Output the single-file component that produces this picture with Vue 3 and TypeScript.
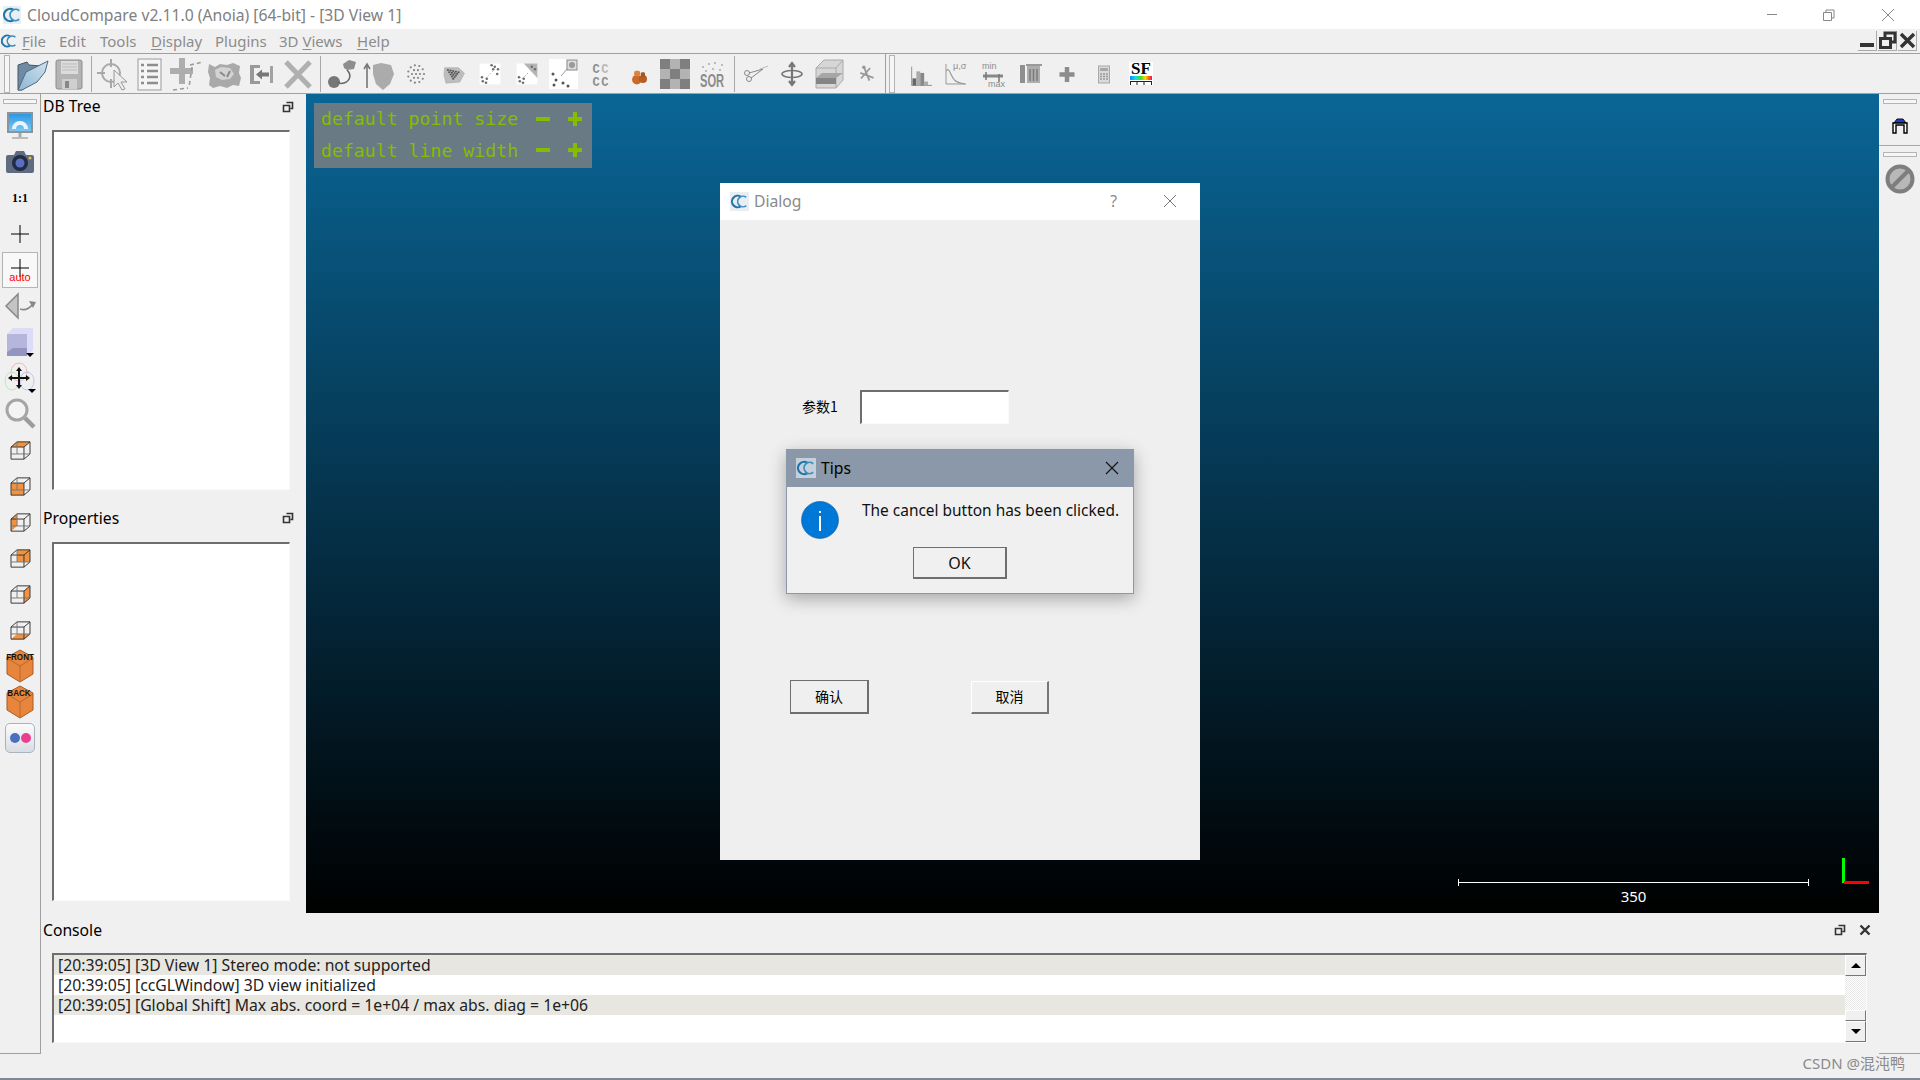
<template>
  <div class="app">
    <svg class="defs" width="0" height="0">
      <symbol id="cc" viewBox="0 0 20 20">
        <path d="M11.500 4.200a6.800 6.800 0 1 0 0 11.600" fill="none" stroke="#1f75a8" stroke-width="2.400" />
        <path d="M18 5.200a6.200 6.200 0 1 0 0 9.600" fill="none" stroke="#3a8fc0" stroke-width="2" />
      </symbol>
      <symbol id="float" viewBox="0 0 12 12">
        <path d="M4.500 1.500h6v6h-2M1.500 4.500h6v6h-6z" fill="#f0f0f0" stroke="#333" stroke-width="1.600" />
      </symbol>
      <linearGradient id="rainbow"><stop offset="0" stop-color="#18f" /><stop offset=".25" stop-color="#1dd" /><stop offset=".5" stop-color="#4d2" /><stop offset=".7" stop-color="#fd0" /><stop offset=".85" stop-color="#f60" /><stop offset="1" stop-color="#f09" /></linearGradient>
      <linearGradient id="folder-front" x1="0" y1="1" x2="1" y2="0"><stop offset="0" stop-color="#8fb6d2" /><stop offset="1" stop-color="#cfe3f0" /></linearGradient>
    </svg>

    <!-- title bar -->
    <header class="titlebar">
      <svg class="logo" width="18" height="18"><use href="#cc" /></svg>
      <span class="title">CloudCompare v2.11.0 (Anoia) [64-bit] - [3D View 1]</span>
      <div class="winctl">
        <svg width="58" height="28" viewBox="0 0 58 28"><path d="M24 13.500h10" stroke="#888" /></svg>
        <svg width="58" height="28" viewBox="0 0 58 28"><path d="M22.500 11.500h8v8h-8zM25 11.500V9h8v8h-2.500" fill="none" stroke="#888" /></svg>
        <svg width="58" height="28" viewBox="0 0 58 28"><path d="M23 8l12 12M35 8L23 20" stroke="#888" /></svg>
      </div>
    </header>

    <!-- menu -->
    <nav class="menubar">
      <svg class="menu-logo" width="16" height="16"><use href="#cc" /></svg>
      <span class="menu" style="width:37px"><u>F</u>ile</span>
      <span class="menu" style="width:41px">Edit</span>
      <span class="menu" style="width:51px">Tools</span>
      <span class="menu" style="width:64px"><u>D</u>isplay</span>
      <span class="menu" style="width:64px">Plugins</span>
      <span class="menu" style="width:78px">3D <u>V</u>iews</span>
      <span class="menu"><u>H</u>elp</span>
      <div class="mdi">
        <button class="mdi-btn"><svg width="18" height="18"><rect x="2" y="12" width="14" height="4" fill="#333" /></svg></button>
        <button class="mdi-btn"><svg width="19" height="19"><path d="M7 6V2h10v9h-4M2.500 7.500h10v9h-10z" fill="none" stroke="#333" stroke-width="3" /></svg></button>
        <button class="mdi-btn"><svg width="19" height="19"><path d="M3 3l13 13M16 3L3 16" stroke="#333" stroke-width="3.400" /></svg></button>
      </div>
    </nav>

    <!-- main toolbar -->
    <div class="toolbar">
      <span class="grip-v first"></span>
      <span class="tb"><svg width="36" height="36">
        <path d="M4 9l9-3 2 3 12 1v8L8 34H4z" fill="#6f8aa3" stroke="#44586a" />
        <path d="M4 34l8-18 22-11-3 11-8 10-15 8z" fill="url(#folder-front)" stroke="#4f6a80" />
      </svg></span>
      <span class="tb"><svg width="36" height="36">
        <rect x="5" y="4" width="26" height="29" rx="2" fill="#b4b4b4" stroke="#8d8d8d" />
        <rect x="10" y="5" width="17" height="13" fill="#dcdcdc" />
        <path d="M11 8h15M11 11h15M11 14h15" stroke="#bbb" />
        <rect x="11" y="23" width="15" height="10" fill="#cfcfcf" />
        <rect x="14" y="25" width="4" height="7" fill="#888" />
      </svg></span>
      <span class="sep"></span>
      <span class="tb"><svg width="36" height="36">
        <circle cx="16" cy="17" r="9" fill="none" stroke="#a8a8a8" stroke-width="2" />
        <path d="M16 3v8M16 23v9M2 17h8" stroke="#a8a8a8" stroke-width="2" />
        <path d="M19 14v17l4-4 4 7 3-1-4-7h6z" fill="#ededed" stroke="#999" />
      </svg></span>
      <span class="tb"><svg width="36" height="36">
        <rect x="6" y="3" width="23" height="31" fill="#f5f5f5" stroke="#9b9b9b" />
        <path d="M9 9h3M15 9h11M9 15h3M15 15h11M9 21h3M15 21h11M9 27h3M15 27h11" stroke="#8e8e8e" stroke-width="2.400" />
      </svg></span>
      <span class="tb"><svg width="36" height="36">
        <path d="M13 2v26M1 15h23" stroke="#adadad" stroke-width="6" />
        <path d="M21 9l13-3M23 11l-3 20M4 34l15-2" stroke="#9a9a9a" stroke-width="1.600" stroke-dasharray="4 3" fill="none" />
      </svg></span>
      <span class="tb"><svg width="36" height="36">
        <path d="M3 8l6 3 5-3 7 1 6-2 7 3-1 7 2 5-2 8-6-1-6 3-7-2-7 2-4-3 1-7-2-6z" fill="#a9a9a9" />
        <path d="M9 14l6-3 9 1 4 6-4 5-8 1-6-3z" fill="#d3d3d3" />
        <path d="M14 16l5 4M24 15l-3 6" stroke="#8a8a8a" stroke-width="2" />
      </svg></span>
      <span class="tb"><svg width="36" height="36">
        <path d="M7 9h10v3h-6v13h6v3H7z" fill="#999" />
        <path d="M13 18.500l6-5v3h7v4h-7v3z" fill="#777" />
        <rect x="27" y="10" width="3" height="17" fill="#a2a2a2" />
      </svg></span>
      <span class="tb"><svg width="36" height="36"><path d="M6 6l24 25M30 6L6 31" stroke="#b0b0b0" stroke-width="5" /></svg></span>
      <span class="sep"></span>
      <span class="tb"><svg width="36" height="36">
        <circle cx="10" cy="26" r="6" fill="#777" />
        <path d="M19 8l6-4 7 2-2 7-7 1-3-2z" fill="#8d8d8d" />
        <path d="M23 14c5 5 3 11-3 13-3 1-5 0-6-1" fill="none" stroke="#666" stroke-width="1.500" />
      </svg></span>
      <span class="tb"><svg width="36" height="36">
        <path d="M6 32V10M3 13l3-5 3 5" fill="none" stroke="#777" stroke-width="1.600" />
        <path d="M12 9l8-2 10 2 3 9-4 10-7 6-7-6-3-10z" fill="#ababab" />
      </svg></span>
      <span class="tb"><svg width="36" height="36"><circle v-for="(d, i) in dotCloud" :key="i" :cx="d[0]" :cy="d[1]" r="1.100" fill="#858585" /></svg></span>
      <span class="tb"><svg width="36" height="36">
        <g transform="translate(7 9) scale(.66 .55)">
          <path d="M4 5h21l9 10-7 16-21 2-3-15z" fill="#bdbdbd" stroke="#a8a8a8" />
          <circle v-for="(d, i) in meshDots" :key="i" :cx="d[0]" :cy="d[1]" r="1.700" fill="#555" />
        </g>
      </svg></span>
      <span class="tb"><svg width="36" height="36">
        <g transform="translate(3.600 3.600) scale(.8)">
          <rect x="5" y="5" width="26" height="26" fill="#fff" />
          <circle v-for="(d, i) in scatterDots" :key="i" :cx="d[0]" :cy="d[1]" r="1.600" fill="#6d6d6d" />
          <path d="M12 24l10-10" stroke="#aaa" stroke-dasharray="2 2" />
        </g>
      </svg></span>
      <span class="tb"><svg width="36" height="36">
        <g transform="translate(3.600 3.600) scale(.8)">
          <rect x="5" y="5" width="26" height="26" fill="#fff" />
          <path d="M14 5h17v18z" fill="#b4b4b4" />
          <circle v-for="(d, i) in scatterDots.slice(0, 6)" :key="i" :cx="d[0]" :cy="d[1]" r="1.600" fill="#6d6d6d" />
          <path d="M12 24l8-8" stroke="#888" stroke-dasharray="2 2" />
        </g>
      </svg></span>
      <span class="tb"><svg width="36" height="36">
        <rect x="3" y="3" width="29" height="30" fill="#fff" />
        <circle cx="7" cy="18" r="1.500" fill="#555" /><circle cx="10" cy="24" r="1.500" fill="#555" /><circle cx="8" cy="29" r="1.500" fill="#555" />
        <circle cx="17" cy="27" r="1.500" fill="#555" /><circle cx="22" cy="30" r="1.500" fill="#555" />
        <path d="M15 20l7-8" stroke="#999" />
        <rect x="21" y="4" width="10" height="10" fill="#ddd" stroke="#888" />
        <circle cx="26" cy="9" r="3" fill="#999" />
      </svg></span>
      <span class="tb"><svg width="36" height="36"><text x="9.500" y="17" class="cc-t">C<tspan fill="#b8b8b8">C</tspan></text><text x="9.500" y="30" class="cc-t">CC</text></svg></span>
      <span class="tb"><svg width="36" height="36">
        <g transform="translate(8 8) scale(.68)">
          <circle cx="13" cy="23" r="7" fill="#c96a2a" /><circle cx="22" cy="22" r="6" fill="#b85d22" />
          <rect x="9" y="10" width="9" height="8" rx="3" fill="#d9843f" /><rect x="19" y="12" width="6" height="7" rx="2" fill="#a85420" />
        </g>
      </svg></span>
      <span class="tb"><svg width="36" height="36">
        <rect x="3" y="3" width="30" height="30" fill="#b3b3b3" />
        <path d="M3 3h10v10H3zM23 3h10v10H23zM13 13h10v10H13zM3 23h10v10H3zM23 23h10v10H23z" fill="#7f7f7f" />
      </svg></span>
      <span class="tb"><svg width="36" height="36">
        <text transform="translate(6 31) scale(.62 1)" class="sor">SOR</text>
        <path d="M8 11h2M14 8h2M20 7h2M27 9h2M11 15h2M18 13h2M25 14h2" stroke="#aaa" stroke-width="1.500" />
      </svg></span>
      <span class="sep tight"></span>
      <span class="tb"><svg width="36" height="36">
        <circle cx="10" cy="17" r="2.500" fill="none" stroke="#888" /><circle cx="12" cy="23" r="2.500" fill="none" stroke="#888" />
        <path d="M12 17l14-4M14 22l12-9" stroke="#888" /><path d="M23 13l8-3" stroke="#bbb" />
      </svg></span>
      <span class="tb"><svg width="36" height="36">
        <path d="M18 7v22M15 11l3-4 3 4M15 25l3 4 3-4" fill="none" stroke="#777" stroke-width="2.200" />
        <ellipse cx="18" cy="18" rx="10" ry="3.500" fill="none" stroke="#777" stroke-width="1.600" />
      </svg></span>
      <span class="tb"><svg width="36" height="36">
        <path d="M5 12l8-8h19v20l-7 8H5z" fill="#d6d6d6" stroke="#aaa" />
        <path d="M5 12h20v20M25 12l7-8" fill="none" stroke="#aaa" />
        <path d="M5 22l6-5h21l-7 5z" fill="#a6a6a6" /><rect x="5" y="22" width="20" height="6" fill="#858585" />
      </svg></span>
      <span class="tb"><svg width="36" height="36">
        <g transform="translate(6 5) scale(.7)">
          <path d="M14 8l8 20M23 10l-13 15M9 17l19 7" stroke="#9a9a9a" stroke-width="2.600" />
          <circle cx="14" cy="9" r="2.500" fill="#999" />
        </g>
      </svg></span>
      <span class="tbreak"></span>
      <span class="grip-v"></span>
      <span class="tb"><svg width="36" height="36">
        <g transform="translate(5 6) scale(.78)">
          <path d="M6 6v24h26" fill="none" stroke="#777" />
          <rect x="7" y="21" width="5" height="9" fill="#666" /><rect x="12" y="12" width="5" height="18" fill="#aaa" /><rect x="17" y="14" width="5" height="16" fill="#888" /><rect x="22" y="25" width="5" height="5" fill="#aaa" />
        </g>
      </svg></span>
      <span class="tb"><svg width="36" height="36">
        <path d="M8 8v20h20" fill="none" stroke="#999" />
        <path d="M8 15c3-4 4 2 7 7 2 4 6 5 12 6" fill="none" stroke="#999" stroke-width="1.200" />
        <text x="15" y="13" class="thin">μ,σ</text>
      </svg></span>
      <span class="tb"><svg width="36" height="36">
        <text x="7" y="13" class="thin">min</text>
        <path d="M8 20h20" stroke="#888" stroke-width="3" /><path d="M11 16v8M24 18v8" stroke="#777" stroke-width="1.500" />
        <text x="13" y="31" class="thin">max</text>
      </svg></span>
      <span class="tb"><svg width="36" height="36">
        <rect x="8" y="9" width="5" height="18" fill="#8f8f8f" />
        <path d="M15 10h13v17H15z" fill="#adadad" /><path d="M14 9h16" stroke="#999" stroke-width="2" />
        <path d="M18 13v12M21.500 13v12M25 13v12" stroke="#777" stroke-width="1.400" />
      </svg></span>
      <span class="tb"><svg width="36" height="36"><path d="M18 11v15M10.500 18.500h15" stroke="#8c8c8c" stroke-width="4.500" /></svg></span>
      <span class="tb"><svg width="36" height="36">
        <rect x="12.500" y="10" width="11" height="17" fill="#dadada" stroke="#a8a8a8" />
        <rect x="14" y="12" width="8" height="3" fill="#a8a8a8" />
        <path d="M14 18h8M14 20.500h8M14 23h8" stroke="#999" stroke-width="1.400" stroke-dasharray="2 1" />
      </svg></span>
      <span class="tb"><svg width="36" height="36">
        <rect x="6" y="6" width="24" height="23" fill="#fff" />
        <text x="18" y="18" text-anchor="middle" class="sf">SF</text>
        <rect x="7" y="20" width="22" height="4" fill="url(#rainbow)" />
        <path d="M7 25.500h22M7.500 25v4M14 25v4M21 25v4M28.500 25v4" stroke="#222" />
      </svg></span>
    </div>

    <div class="main">
      <!-- left view toolbar -->
      <aside class="side left">
        <span class="grip-h"></span>
        <span class="sb"><svg width="30" height="30">
          <defs><linearGradient id="screen" x1="0" y1="0" x2="0" y2="1"><stop offset="0" stop-color="#2f97e4" /><stop offset="1" stop-color="#7cc8f4" /></linearGradient></defs>
          <rect x="2" y="1" width="26" height="21" fill="#8a949c" />
          <rect x="4" y="3" width="22" height="17" fill="url(#screen)" />
          <path d="M9 18a6 6 0 0 1 12 0" fill="none" stroke="#e8f5ff" stroke-width="4" />
          <path d="M15 22v4" stroke="#a9a9a9" stroke-width="3" /><path d="M7 27h16" stroke="#bbb" stroke-width="2" />
        </svg></span>
        <span class="sb"><svg width="30" height="30">
          <path d="M3 8h6l2-4h8l2 4h6a2 2 0 0 1 2 2v14a2 2 0 0 1-2 2H3a2 2 0 0 1-2-2V10a2 2 0 0 1 2-2z" fill="#5f6b80" />
          <circle cx="15" cy="16" r="8" fill="#222c44" /><circle cx="15" cy="16" r="4.500" fill="#5a6fc0" /><circle cx="25" cy="11" r="1.500" fill="#e2c23a" />
        </svg></span>
        <span class="sb"><span class="one-one">1:1</span></span>
        <span class="sb"><svg width="20" height="20"><path d="M10 1v18M1 10h18" stroke="#000" /></svg></span>
        <span class="sb checked"><svg width="30" height="30">
          <path d="M15 4v18M6 13h18" stroke="#000" /><text x="15" y="26" text-anchor="middle" class="auto">auto</text>
        </svg></span>
        <span class="sb"><svg width="32" height="30">
          <path d="M14 3v24L2 15z" fill="#c4c4c4" stroke="#888" stroke-width="1.500" />
          <path d="M16 18c5 2 9 0 13-5" fill="none" stroke="#888" stroke-width="1.800" /><path d="M25 10l7 1-3 6z" fill="#888" />
        </svg></span>
        <span class="sb"><svg width="32" height="32">
          <path d="M3 8l6-6h20v22l-6 6H3z" fill="#dcdcf6" /><path d="M3 8h20v22H3z" fill="#b6b6dc" /><path d="M3 26l6-4h14v8H3z" fill="#9494c0" />
          <path d="M22 27h8l-4 4z" fill="#000" />
        </svg></span>
        <span class="sb"><svg width="32" height="32">
          <ellipse cx="15" cy="10" rx="8" ry="9" fill="none" stroke="#f0b8b8" /><ellipse cx="8" cy="19" rx="7" ry="9" fill="none" stroke="#b8e8b8" /><ellipse cx="23" cy="19" rx="7" ry="9" fill="none" stroke="#b8c8f0" />
          <path d="M15 8v16M7 16h16" stroke="#111" stroke-width="2" /><path d="M15 5l-3 4h6zM15 27l-3-4h6zM4 16l4-3v6zM26 16l-4-3v6z" fill="#111" />
          <path d="M24 27h8l-4 4z" fill="#000" />
        </svg></span>
        <span class="sb"><svg width="32" height="32">
          <circle cx="13" cy="12" r="10" fill="#f4f4f4" stroke="#a5a5a5" stroke-width="3" /><path d="M21 20l9 9" stroke="#9c9c9c" stroke-width="4.500" />
        </svg></span>
        <span v-for="(c, i) in cubeViews" :key="i" class="sb"><svg width="21" height="19" viewBox="0 0 24 22">
          <polygon :points="c" fill="#f0923f" />
          <path d="M1 7h15v14H1zM1 7l7-6h15v14l-7 6M23 1l-7 6" fill="none" stroke="#333" stroke-width="1.100" />
          <path d="M8 1v14H1M8 15h15" fill="none" stroke="#777" stroke-width="1.100" />
        </svg></span>
        <span class="sb"><svg width="30" height="34">
          <path d="M15 1l13 7v17l-13 8-13-8V8z" fill="#e8853d" stroke="#a85d28" /><path d="M2 9l13 8 13-8M15 17v16" fill="none" stroke="#b56a30" />
          <text transform="translate(15 11) scale(.85 1)" text-anchor="middle" class="cube-t">FRONT</text>
        </svg></span>
        <span class="sb"><svg width="30" height="34">
          <path d="M15 1l13 7v17l-13 8-13-8V8z" fill="#e8853d" stroke="#a85d28" /><path d="M2 9l13 8 13-8M15 17v16" fill="none" stroke="#b56a30" />
          <text transform="translate(14 11) scale(.85 1)" text-anchor="middle" class="cube-t">BACK</text>
        </svg></span>
        <span class="sb"><span class="stereo"><i class="blue"></i><i class="pink"></i></span></span>
      </aside>

      <div class="center">
        <div class="upper">
          <!-- docks -->
          <section class="docks">
            <div class="dock-head tree-head">
              <span>DB Tree</span>
              <svg width="12" height="12"><use href="#float" /></svg>
            </div>
            <div class="sunken tree"></div>
            <div class="dock-head prop-head">
              <span>Properties</span>
              <svg width="12" height="12"><use href="#float" /></svg>
            </div>
            <div class="sunken props"></div>
          </section>

          <!-- 3D view -->
          <section class="view">
            <div class="hot">
              <div class="hot-row"><span class="hot-label">default point size</span><i class="minus"></i><i class="plus"></i></div>
              <div class="hot-row"><span class="hot-label">default line width</span><i class="minus"></i><i class="plus"></i></div>
            </div>

            <div class="scale">
              <div class="scale-bar"></div>
              <div class="scale-num">350</div>
            </div>
            <i class="axis-y"></i>
            <i class="axis-x"></i>

            <div class="dialog">
              <div class="dlg-title">
                <span class="dlg-logo"><svg width="17" height="17"><use href="#cc" /></svg></span>
                <span class="dlg-name">Dialog</span>
                <span class="dlg-help">?</span>
                <svg class="dlg-x" width="14" height="14"><path d="M1 1l12 12M13 1L1 13" stroke="#777" /></svg>
              </div>
              <div class="form-row">
                <label class="form-label">参数1</label>
                <input class="form-input" type="text" />
              </div>
              <div class="btn-row">
                <button class="qbtn focus">确认</button>
                <button class="qbtn raised">取消</button>
              </div>

              <div class="tips">
                <div class="tips-title">
                  <span class="tips-logo"><svg width="18" height="18"><use href="#cc" /></svg></span>
                  <span>Tips</span>
                  <svg class="tips-x" width="14" height="14"><path d="M1 1l12 12M13 1L1 13" stroke="#111" stroke-width="1.100" /></svg>
                </div>
                <div class="tips-body">
                  <svg width="38" height="38">
                    <circle cx="19" cy="19" r="18.500" fill="#0078d7" stroke="#0a5a9e" stroke-width=".6" />
                    <rect x="18" y="15" width="2" height="15" fill="#fff" /><rect x="18" y="10" width="2" height="2" fill="#fff" />
                  </svg>
                  <p class="tips-msg">The cancel button has been clicked.</p>
                </div>
                <button class="ok">OK</button>
              </div>
            </div>
          </section>
        </div>

        <!-- console -->
        <section class="console">
          <div class="console-head">
            <span>Console</span>
            <svg class="con-float" width="12" height="12"><use href="#float" /></svg>
            <svg width="12" height="12"><path d="M1.500 1.500l9 9M10.500 1.500l-9 9" stroke="#333" stroke-width="2.400" /></svg>
          </div>
          <div class="sunken log">
            <div class="log-list">
              <div v-for="(line, i) in logLines" :key="i" class="log-row" :class="{ alt: i % 2 === 0 }">{{ line }}</div>
            </div>
            <div class="scroll">
              <span class="sc-btn"><i class="tri up"></i></span>
              <span class="sc-track"></span>
              <span class="sc-thumb"></span>
              <span class="sc-btn"><i class="tri down"></i></span>
            </div>
          </div>
        </section>
      </div>

      <!-- right toolbar -->
      <aside class="side right">
        <span class="grip-h"></span>
        <span class="rb"><svg width="18" height="18">
          <path d="M3 6l3-4h6l3 4z" fill="#1a3fe0" stroke="#111" />
          <path d="M2 16V6h14v10h-3V8H5v8z" fill="#fff" stroke="#000" stroke-width="1.400" />
        </svg></span>
        <span class="rb-line"></span>
        <span class="grip-h"></span>
        <span class="rb"><svg width="30" height="30">
          <circle cx="15" cy="15" r="12.500" fill="#b8b8b8" stroke="#7e7e7e" stroke-width="4" />
          <path d="M7 23L23 7" stroke="#7e7e7e" stroke-width="4" />
        </svg></span>
      </aside>
    </div>

    <footer class="status"><span class="mark">CSDN @混沌鸭</span></footer>
  </div>
</template>

<script setup lang="ts">
const logLines: string[] = [
  "[20:39:05] [3D View 1] Stereo mode: not supported",
  "[20:39:05] [ccGLWindow] 3D view initialized",
  "[20:39:05] [Global Shift] Max abs. coord = 1e+04 / max abs. diag = 1e+06",
];

// 正方体视图图标的高亮面
const cubeViews: string[] = [
  "1,7 8,1 23,1 16,7",
  "1,7 16,7 16,21 1,21",
  "1,7 8,1 8,15 1,21",
  "8,1 23,1 23,15 8,15",
  "16,7 23,1 23,15 16,21",
  "1,21 8,15 23,15 16,21",
];

// 点云图标的散点
const dotCloud: number[][] = [];
for (let r = 0; r < 3; r++) {
  const n = [1, 6, 11][r];
  for (let i = 0; i < n; i++) {
    const a = (i / n) * Math.PI * 2;
    dotCloud.push([18 + Math.cos(a) * r * 4, 18 + Math.sin(a) * r * 4.4]);
  }
}

const meshDots: number[][] = [];
for (let row = 0; row < 5; row++) {
  for (let col = 0; col < 5 - row; col++) {
    meshDots.push([9 + col * 4 + row * 2, 9 + row * 4 + col]);
  }
}

const scatterDots: number[][] = [
  [9, 27], [13, 29], [8, 22], [14, 24], [24, 9], [28, 12], [20, 7], [27, 18], [22, 12],
];
</script>

<style>
html,
body {
  margin: 0;
  background: #f0f0f0;
}
</style>

<style scoped>
.app {
  width: 1920px;
  height: 1080px;
  display: flex;
  flex-direction: column;
  overflow: hidden;
  position: relative;
  background: #f0f0f0;
  font-family: "Open Sans", "Noto Sans CJK SC", sans-serif;
  font-size: 15px;
  color: #111;
}
.defs {
  position: absolute;
}
.titlebar {
  height: 29px;
  flex: none;
  background: #fff;
  display: flex;
  align-items: center;
}
.logo {
  margin: 0 6px 0 3px;
  background: #e8eef2;
}
.title {
  color: #808080;
  font-size: 15.7px;
  font-family: "Noto Sans", "Open Sans", sans-serif;
}
.winctl {
  margin-left: auto;
  display: flex;
  padding-right: 3px;
}
.menubar {
  height: 24px;
  flex: none;
  display: flex;
  align-items: center;
  color: #8c8c8c;
  font-family: "Noto Sans", sans-serif;
  font-size: 15px;
}
.menu-logo {
  margin: 0 5px 0 1px;
}
.menu {
  display: inline-block;
  white-space: nowrap;
}
.menu u {
  text-underline-offset: 2px;
}
.mdi {
  margin-left: auto;
  display: flex;
  gap: 1px;
  padding-right: 3px;
}
.mdi-btn {
  width: 19px;
  height: 20px;
  padding: 0;
  border: none;
  background: #f0f0f0;
  border-right: 1px solid #aaa;
  border-bottom: 1px solid #aaa;
}
.toolbar {
  height: 39px;
  flex: none;
  display: flex;
  align-items: center;
  border-top: 1px solid #a0a0a0;
  border-bottom: 1px solid #a0a0a0;
}
.tb {
  width: 36.95px;
  height: 39px;
  flex: none;
  display: flex;
  align-items: center;
  justify-content: center;
}
.tb svg {
  display: block;
}
.grip-v {
  width: 4px;
  height: 36px;
  flex: none;
  border: 1px solid #b4b4b4;
  background: #f6f6f6;
  margin: 0 6px 0 3px;
}
.grip-v.first {
  margin-left: 4px;
  margin-right: 3.5px;
}
.sep {
  width: 1px;
  height: 36px;
  flex: none;
  background: #a8a8a8;
  margin: 0 3px 0 3.5px;
}
.sep.tight {
  margin-right: 1.5px;
}
.tbreak {
  width: 1px;
  height: 39px;
  flex: none;
  background: #a0a0a0;
  margin-left: 1px;
}
.cc-t {
  font: bold 12px "Liberation Mono", monospace;
  fill: #8e8e8e;
  letter-spacing: 1.5px;
}
.sor {
  font: bold 18px "Liberation Sans", sans-serif;
  fill: #8c8c8c;
}
.thin {
  font: 9px "Liberation Sans", sans-serif;
  fill: #8c8c8c;
}
.sf {
  font: bold 17px "Liberation Serif", serif;
  fill: #000;
}
.main {
  flex: 1;
  display: flex;
  min-height: 0;
  height: 960px;
}
.side {
  flex: none;
  display: flex;
  flex-direction: column;
  align-items: center;
  height: 960px;
  border-bottom: 1px solid #a0a0a0;
  box-sizing: border-box;
}
.left {
  width: 41px;
  border-right: 1px solid #a0a0a0;
}
.right {
  width: 41px;
}
.grip-h {
  width: 32px;
  height: 3px;
  flex: none;
  border: 1px solid #b4b4b4;
  background: #f6f6f6;
  margin: 5px 0 4px;
}
.sb {
  width: 36px;
  height: 36px;
  flex: none;
  display: flex;
  align-items: center;
  justify-content: center;
  box-sizing: border-box;
}
.sb.checked {
  background: #f8f8f8;
  border: 1px solid #b4b4b4;
}
.one-one {
  font: bold 12px "Liberation Serif", serif;
  color: #000;
}
.auto {
  font: 11px "Liberation Sans", sans-serif;
  fill: #f00;
}
.cube-t {
  font: bold 9.5px "Liberation Sans", sans-serif;
  fill: #111;
}
.stereo {
  width: 30px;
  height: 30px;
  box-sizing: border-box;
  border: 1px solid #aab2bc;
  border-radius: 5px;
  background: linear-gradient(#fbfbfb, #d8dde4);
  display: flex;
  align-items: center;
  justify-content: center;
  gap: 1px;
}
.stereo i {
  width: 10px;
  height: 10px;
  border-radius: 50%;
}
.blue {
  background: #4a6fc0;
}
.pink {
  background: #e8408e;
}
.rb {
  height: 36px;
  display: flex;
  align-items: center;
  justify-content: center;
  flex: none;
}
.rb-line {
  width: 100%;
  height: 1px;
  background: #a8a8a8;
  margin-top: 1px;
  flex: none;
}
.rb-line + .grip-h {
  margin-top: 6px;
}
.center {
  flex: 1;
  min-width: 0;
  display: flex;
  flex-direction: column;
}
.upper {
  height: 819px;
  flex: none;
  display: flex;
}
.docks {
  width: 265px;
  flex: none;
  box-sizing: border-box;
  padding-right: 16px;
}
.dock-head {
  display: flex;
  align-items: center;
  justify-content: space-between;
  padding-left: 2px;
  font-family: "Noto Sans", sans-serif;
  font-size: 15.7px;
  color: #000;
}
.tree-head span {
  position: relative;
  top: -1px;
}
.tree-head {
  height: 26px;
  margin-bottom: 10px;
}
.prop-head {
  height: 24px;
  margin-top: 16px;
  margin-bottom: 12px;
}
.dock-head svg {
  margin-right: -4px;
}
.sunken {
  box-sizing: border-box;
  background: #fff;
  border-top: 2px solid #6e6e6e;
  border-left: 2px solid #6e6e6e;
  border-right: 1px solid #fafafa;
  border-bottom: 1px solid #fafafa;
}
.tree {
  height: 360px;
  margin-left: 11px;
}
.props {
  height: 359px;
  margin-left: 11px;
}
.view {
  flex: 1;
  position: relative;
  background: linear-gradient(#0a6697, #000);
}
.hot {
  position: absolute;
  left: 8px;
  top: 9px;
  width: 278px;
  height: 65px;
  box-sizing: border-box;
  padding: 0 0 2px 7px;
  background: #6a7a84;
  display: flex;
  flex-direction: column;
  justify-content: space-around;
}
.hot-row {
  display: flex;
  align-items: center;
  height: 32px;
}
.hot-label {
  width: 215px;
  font: 18.2px "DejaVu Sans Mono", monospace;
  color: #84bd00;
  white-space: pre;
}
.minus {
  width: 14px;
  height: 4px;
  background: #84bd00;
  margin-right: 18px;
}
.plus {
  width: 14px;
  height: 14px;
  background: linear-gradient(#84bd00, #84bd00) center / 14px 4px no-repeat, linear-gradient(#84bd00, #84bd00) center / 4px 14px no-repeat;
}
.scale {
  position: absolute;
  left: 1152px;
  top: 785px;
  width: 351px;
  text-align: center;
}
.scale-bar {
  height: 7px;
  box-sizing: border-box;
  border-left: 1px solid #fff;
  border-right: 1px solid #fff;
  background: linear-gradient(#fff, #fff) center / 100% 1px no-repeat;
}
.scale-num {
  color: #fff;
  font: 15px "Noto Sans", sans-serif;
  margin-top: 0;
}
.axis-y {
  position: absolute;
  left: 1536px;
  top: 764px;
  width: 3px;
  height: 25px;
  background: #0f0;
}
.axis-x {
  position: absolute;
  left: 1538px;
  top: 787px;
  width: 25px;
  height: 3px;
  background: #f00;
}
.dialog {
  position: absolute;
  left: 414px;
  top: 89px;
  width: 480px;
  height: 677px;
  background: #efefef;
}
.dlg-title {
  height: 37px;
  padding-bottom: 1px;
  box-sizing: border-box;
  background: #fff;
  display: flex;
  align-items: center;
}
.dlg-logo {
  width: 19px;
  height: 19px;
  margin: 0 5px 0 10px;
  background: #e8eef2;
  display: flex;
  align-items: center;
  justify-content: center;
}
.dlg-name {
  color: #8a8a8a;
  font: 15.7px "Noto Sans", sans-serif;
}
.dlg-help {
  margin-left: auto;
  color: #8a8a8a;
  font: 15.7px "Noto Sans", sans-serif;
}
.dlg-x {
  margin: 0 23px 0 46px;
}
.form-row {
  display: flex;
  align-items: center;
  margin-top: 170px;
  padding-left: 82px;
}
.form-label {
  width: 58px;
  font: 14px "Noto Sans CJK SC", sans-serif;
  color: #000;
  position: relative;
  top: -1px;
}
.form-input {
  width: 149px;
  height: 34px;
  box-sizing: border-box;
  outline: none;
  background: #fff;
  border-top: 2px solid #6e6e6e;
  border-left: 2px solid #6e6e6e;
  border-right: 1px solid #fafafa;
  border-bottom: 1px solid #fafafa;
  padding: 0;
}
.btn-row {
  display: flex;
  align-items: flex-start;
  margin-top: 256px;
  padding-left: 70px;
  gap: 102px;
}
.qbtn {
  height: 34px;
  background: #efefef;
  padding: 0 0 2px;
  font: 14px "Noto Sans CJK SC", sans-serif;
  color: #000;
  box-sizing: border-box;
}
.qbtn.focus {
  width: 79px;
  border: 1px solid #6e6e6e;
  border-right-width: 2px;
  border-bottom-width: 2px;
}
.qbtn.raised {
  width: 78px;
  margin-top: 1px;
  height: 33px;
  border: 1px solid #fff;
  border-right: 2px solid #777;
  border-bottom: 2px solid #777;
}
.tips {
  position: absolute;
  left: 66px;
  top: 266px;
  width: 348px;
  height: 145px;
  box-sizing: border-box;
  border: 1px solid #8a98aa;
  border-top: none;
  background: #f0f0f0;
  box-shadow: 0 5px 16px rgba(0, 0, 0, 0.3);
  display: flex;
  flex-direction: column;
  font-family: "Noto Sans", sans-serif;
}
.tips-title {
  height: 38px;
  flex: none;
  margin: 0 -1px;
  background: #8a98aa;
  display: flex;
  align-items: center;
  color: #000;
  font-size: 15.7px;
}
.tips-logo {
  width: 20px;
  height: 20px;
  margin: 0 5px 0 10px;
  background: #c6d0da;
  display: flex;
  align-items: center;
  justify-content: center;
}
.tips-x {
  margin-left: auto;
  margin-right: 15px;
}
.tips-body {
  display: flex;
  align-items: flex-start;
  margin-top: 14px;
  padding-left: 14px;
  gap: 23px;
}
.tips-msg {
  margin: -2px 0 0;
  font-size: 15.45px;
  line-height: 22px;
  color: #111;
  white-space: nowrap;
}
.ok {
  width: 94px;
  height: 32px;
  align-self: center;
  margin-top: 8px;
  background: #f0f0f0;
  border: 1px solid #6e6e6e;
  border-right-width: 2px;
  border-bottom-width: 2px;
  box-sizing: border-box;
  padding: 0;
  font: 16px "Noto Sans", sans-serif;
  color: #111;
}
.console {
  flex: 1;
  display: flex;
  flex-direction: column;
}
.console-head {
  height: 40px;
  flex: none;
  display: flex;
  align-items: center;
  gap: 13px;
  padding: 0 8px 6px 2px;
  box-sizing: border-box;
  font: 15.7px "Noto Sans", sans-serif;
  color: #000;
}
.con-float {
  margin-left: auto;
}
.log {
  height: 90px;
  margin: 0 12px 0 11px;
  display: flex;
}
.log-list {
  flex: 1;
  min-width: 0;
}
.log-row {
  height: 20px;
  padding-left: 4px;
  font: 15.75px/20px "Noto Sans", sans-serif;
  color: #222;
  white-space: pre;
}
.log-row.alt {
  background: #e8e6e1;
}
.scroll {
  width: 21px;
  flex: none;
  display: flex;
  flex-direction: column;
}
.sc-btn {
  height: 21px;
  flex: none;
  box-sizing: border-box;
  background: #f0f0f0;
  border: 1px solid #fff;
  border-right: 1px solid #777;
  border-bottom: 1px solid #777;
  display: flex;
  align-items: center;
  justify-content: center;
}
.sc-track {
  flex: 1;
  background: repeating-conic-gradient(#e8e8e8 0 25%, #fff 0 50%) 0 0 / 2px 2px;
}
.sc-thumb {
  height: 11px;
  flex: none;
  box-sizing: border-box;
  background: #f0f0f0;
  border: 1px solid #fff;
  border-right: 1px solid #777;
  border-bottom: 1px solid #777;
}
.tri {
  width: 0;
  height: 0;
  border-left: 5px solid transparent;
  border-right: 5px solid transparent;
}
.tri.up {
  border-bottom: 5px solid #000;
}
.tri.down {
  border-top: 5px solid #000;
}
.status {
  height: 24px;
  flex: none;
  display: flex;
  align-items: flex-start;
  justify-content: flex-end;
  padding-right: 15px;
  box-sizing: content-box;
  border-bottom: 2px solid #808792;
}
.mark {
  font: 15px "Noto Sans", "Noto Sans CJK SC", sans-serif;
  color: #8a8a8a;
  margin-top: -2px;
}
</style>
